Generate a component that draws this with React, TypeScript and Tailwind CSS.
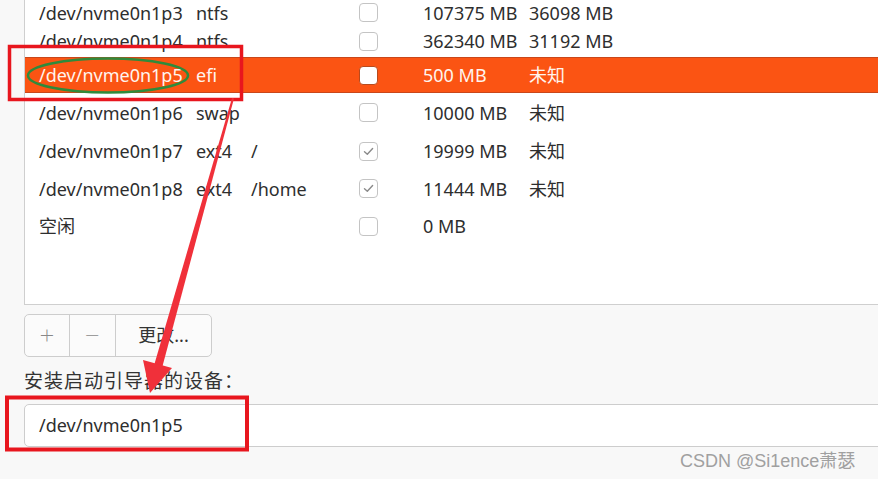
import React from "react";

type Row = {
  dev: string;
  fs: string;
  mount: string;
  checked: boolean;
  size: string;
  used: string;
  h: number;
  selected?: boolean;
};

const rows: Row[] = [
  { dev: "/dev/nvme0n1p3", fs: "ntfs", mount: "", checked: false, size: "107375 MB", used: "36098 MB", h: 25 },
  { dev: "/dev/nvme0n1p4", fs: "ntfs", mount: "", checked: false, size: "362340 MB", used: "31192 MB", h: 32 },
  { dev: "/dev/nvme0n1p5", fs: "efi", mount: "", checked: false, size: "500 MB", used: "未知", h: 36, selected: true },
  { dev: "/dev/nvme0n1p6", fs: "swap", mount: "", checked: false, size: "10000 MB", used: "未知", h: 39 },
  { dev: "/dev/nvme0n1p7", fs: "ext4", mount: "/", checked: true, size: "19999 MB", used: "未知", h: 38 },
  { dev: "/dev/nvme0n1p8", fs: "ext4", mount: "/home", checked: true, size: "11444 MB", used: "未知", h: 37 },
  { dev: "空闲", fs: "", mount: "", checked: false, size: "0 MB", used: "", h: 38 },
];

function Check({ checked, selected }: { checked: boolean; selected?: boolean }) {
  return (
    <div
      className={
        selected
          ? "w-[19px] h-[19px] rounded-[4px] border border-[#b84a1c] bg-white"
          : "w-[19px] h-[19px] rounded-[4px] border border-[#c4c4c4] bg-white flex items-center justify-center"
      }
    >
      {checked && (
        <svg width="13" height="13" viewBox="0 0 13 13">
          <path d="M2.5 6.8 L5.3 9.3 L10.6 3.6" fill="none" stroke="#8a8a8a" strokeWidth="1.4" strokeLinecap="round" strokeLinejoin="round" />
        </svg>
      )}
    </div>
  );
}

export default function App() {
  return (
    <div
      className="relative w-[878px] h-[479px] overflow-hidden bg-[#f8f8f8] pl-[24px]"
      style={{ fontFamily: '"Noto Sans", "Noto Sans CJK SC", sans-serif' }}
    >
      {/* partition table */}
      <div className="w-[900px] h-[305px] bg-white border-l border-b border-[#cfcfcf] text-[18px] text-[#2e2e2e]">
        {rows.map((r, i) => (
          <div
            key={i}
            className={
              r.selected
                ? "flex items-center pl-[14px] bg-[#fb5413] border-y border-[#c9471a] text-[#fff4ee]"
                : "flex items-center pl-[14px]"
            }
            style={{ height: r.h }}
          >
            <div className="w-[157px] whitespace-nowrap leading-none">{r.dev}</div>
            <div className="w-[55px] whitespace-nowrap leading-none">{r.fs}</div>
            <div className="w-[108px] whitespace-nowrap leading-none">{r.mount}</div>
            <div className="w-[64px]">
              <Check checked={r.checked} selected={r.selected} />
            </div>
            <div className="w-[106px] whitespace-nowrap leading-none">{r.size}</div>
            <div className="whitespace-nowrap leading-none">{r.used}</div>
          </div>
        ))}
      </div>

      {/* + - change buttons */}
      <div className="mt-[9px] flex h-[43px] w-[188px] rounded-[5px] border border-[#cdcdcd] bg-[#fbfbfb] text-[18px]">
        <div className="w-[45px] flex items-center justify-center border-r border-[#cdcdcd] text-[26px] font-extralight text-[#888]">+</div>
        <div className="w-[46px] flex items-center justify-center border-r border-[#cdcdcd] text-[26px] font-extralight text-[#888]">−</div>
        <div className="flex-1 flex items-center justify-center text-[#333]">更改...</div>
      </div>

      {/* boot loader device */}
      <div className="mt-[12px] h-[24px] flex items-center text-[19px] tracking-[1px] text-[#333] whitespace-nowrap">安装启动引导器的设备：</div>
      <div className="mt-[11px] h-[43px] w-[900px] rounded-[5px] border border-[#cdcdcd] bg-white flex items-center pl-[14px] text-[18px] text-[#2e2e2e]">
        /dev/nvme0n1p5
      </div>

      {/* watermark */}
      <div className="absolute left-[680px] top-[448px] text-[18px] text-[#a0a0a0] whitespace-nowrap" style={{ fontFamily: '"Liberation Sans", "Noto Sans CJK SC", sans-serif' }}>
        CSDN @Si1ence萧瑟
      </div>

      {/* annotations */}
      <svg className="absolute left-0 top-0" width="878" height="479" viewBox="0 0 878 479">
        <rect x="9.5" y="46.5" width="232" height="53" fill="none" stroke="#e8161e" strokeWidth="3.5" />
        <ellipse cx="108" cy="75.5" rx="80" ry="17" fill="none" stroke="#2f8a3c" strokeWidth="2.5" />
        <rect x="7" y="397.5" width="240" height="52" fill="none" stroke="#e8161e" strokeWidth="4" />
        <polygon points="232,98 234,98.5 162,368 154,365.5" fill="#f0303a" />
        <polygon points="150,393 143,360 172,368" fill="#f0303a" />
      </svg>
    </div>
  );
}
